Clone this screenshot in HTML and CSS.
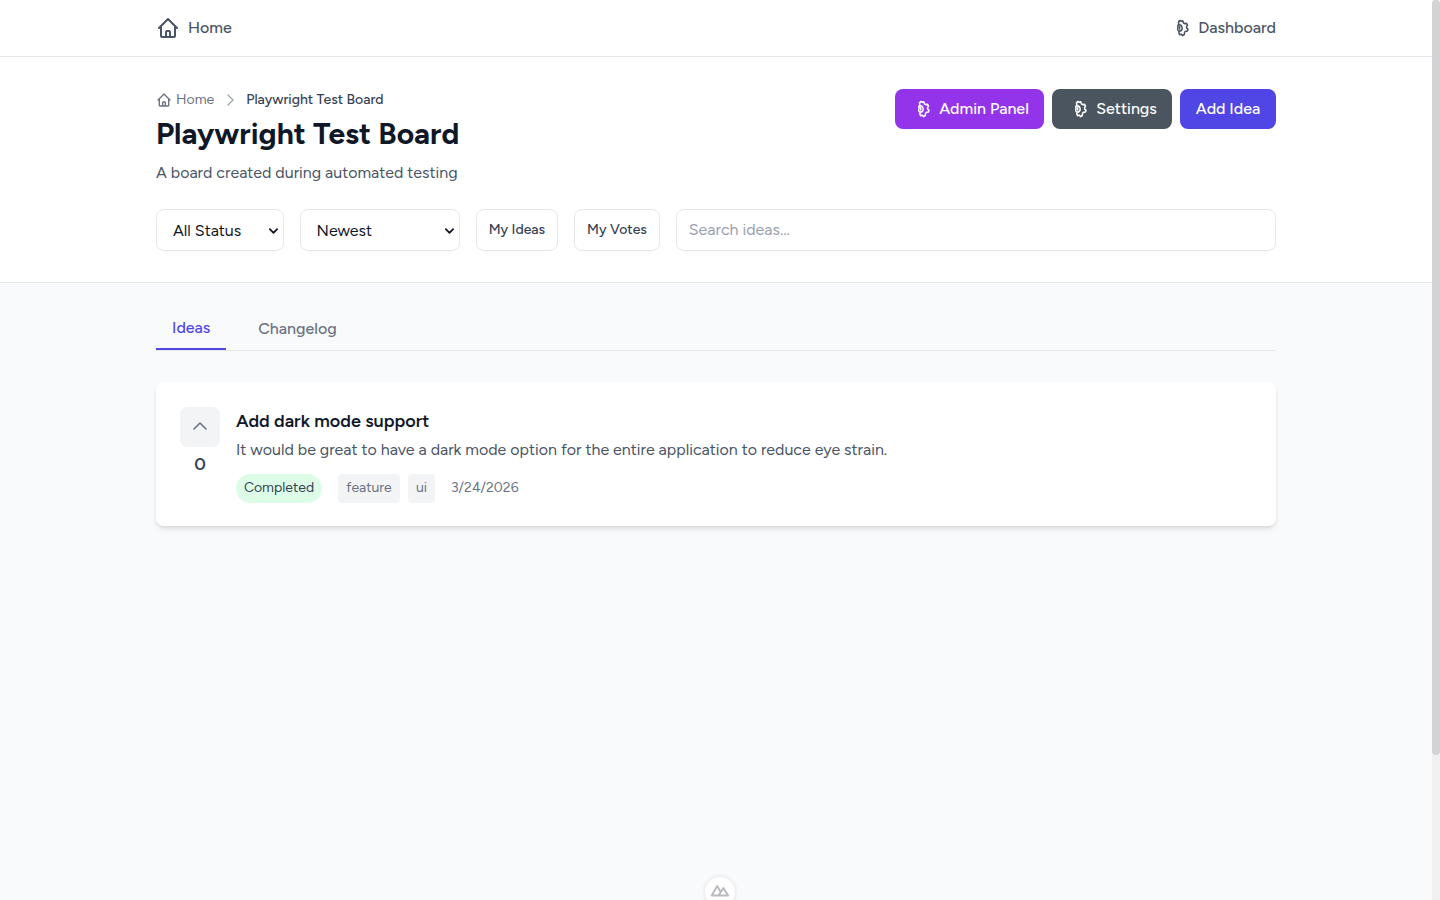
FILE: index.html
```
<!DOCTYPE html>
<html lang="en">
<head>
    <meta charset="UTF-8">
    <meta name="viewport" content="width=device-width, initial-scale=1.0">
    <title>Playwright Test Board</title>
    <link rel="stylesheet" href="styles.css">
</head>
<body>
    <svg class="sprite" aria-hidden="true">
        <symbol id="home" viewBox="0 0 24 24">
            <path d="M3 12l2-2m0 0l7-7 7 7M5 10v10a1 1 0 001 1h3m10-11l2 2m-2-2v10a1 1 0 01-1 1h-3m-6 0a1 1 0 001-1v-4a1 1 0 011-1h2a1 1 0 011 1v4a1 1 0 001 1m-6 0h6"/>
        </symbol>
        <symbol id="cog" viewBox="0 0 16 18">
            <path transform="translate(1.9 0) scale(.88 1)" d="M3.400 5.200L2.900 3 4.600 1.500l1.900.8 1.300-.5.8 2.100 1.300.700 2.100-.3 1.200 1.700-1.100 1.800.1 1.200 1.600 1.400-.8 1.600-2.200.3-1 1-.2 2.200-1.900 1.100-1.700-1.400-1.600.4-1.100-1.300.5-2.100M3.200 5.600C2 6.300 2 7.500 2.500 8.500c-.9 1.200-.5 2.900.8 3.500 2.200.5 3.800-.9 3.800-2.800S5.400 5.800 3.200 5.600zM4.300 7.800v2"/>
        </symbol>
    </svg>

    <nav class="navbar">
        <div class="container nav-row">
            <a class="nav-link" href="#"><svg class="icon-home"><use href="#home"/></svg><span>Home</span></a>
            <a class="nav-link" href="#"><svg class="icon-cog"><use href="#cog"/></svg><span>Dashboard</span></a>
        </div>
    </nav>

    <header class="board-header">
        <div class="container">
            <div class="header-top">
                <div>
                    <div class="breadcrumb">
                        <svg class="icon-small"><use href="#home"/></svg>
                        <a href="#">Home</a>
                        <svg class="chevron" viewBox="0 0 16 16"><path d="M6 3l5 5-5 5"/></svg>
                        <span class="current">Playwright Test Board</span>
                    </div>
                    <h1>Playwright Test Board</h1>
                    <p class="description">A board created during automated testing</p>
                </div>
                <div class="actions">
                    <button class="btn purple"><svg class="icon-cog"><use href="#cog"/></svg><span>Admin Panel</span></button>
                    <button class="btn gray"><svg class="icon-cog"><use href="#cog"/></svg><span>Settings</span></button>
                    <button class="btn indigo"><span>Add Idea</span></button>
                </div>
            </div>

            <div class="filters">
                <div class="field select status"><span>All Status</span><svg viewBox="0 0 10 6"><path d="M1 1l4 4 4-4"/></svg></div>
                <div class="field select sort"><span>Newest</span><svg viewBox="0 0 10 6"><path d="M1 1l4 4 4-4"/></svg></div>
                <button class="field toggle my-ideas">My Ideas</button>
                <button class="field toggle my-votes">My Votes</button>
                <input class="field search" type="text" placeholder="Search ideas...">
            </div>
        </div>
    </header>

    <main class="container">
        <div class="tabs">
            <a class="tab active" href="#">Ideas</a>
            <a class="tab" href="#">Changelog</a>
        </div>

        <article class="card">
            <div class="vote">
                <button class="vote-btn"><svg viewBox="0 0 20 20"><path d="M4 13l6-6 6 6"/></svg></button>
                <span class="count">0</span>
            </div>
            <div class="idea">
                <h3>Add dark mode support</h3>
                <p>It would be great to have a dark mode option for the entire application to reduce eye strain.</p>
                <div class="meta">
                    <span class="badge">Completed</span>
                    <span class="tag feature">feature</span>
                    <span class="tag ui">ui</span>
                    <span class="date">3/24/2026</span>
                </div>
            </div>
        </article>
    </main>

    <div class="devtools">
        <svg viewBox="0 0 20 13"><path d="M11.500 11.500H1.800L7.200 2l3.600 6.300M8.500 11.500L13.400 4l4.800 7.500H12"/></svg>
    </div>
    <div class="scrollbar"><div class="thumb"></div></div>
</body>
</html>
```

FILE: styles.css
```
* {
    box-sizing: border-box;
}
body {
    margin: 0;
    padding-right: 8px;
    height: 900px;
    overflow: hidden;
    background: #f9fafb;
    color: #101828;
    font-family: Figtree, Inter, "Liberation Sans", sans-serif;
    font-size: 16px;
    line-height: 24px;
}
h1, h3, p {
    margin: 0;
}
a {
    color: inherit;
    text-decoration: none;
}
button, input {
    font-family: inherit;
}
svg {
    flex: none;
    fill: none;
    stroke: currentColor;
    stroke-width: 2;
    stroke-linecap: round;
    stroke-linejoin: round;
}
.sprite {
    display: none;
}
.container {
    width: 1120px;
    margin: 0 auto;
}

.navbar {
    height: 57px;
    background: #fff;
    border-bottom: 1px solid #e5e7eb;
}
.nav-row {
    display: flex;
    justify-content: space-between;
    align-items: center;
    height: 56px;
}
.nav-link {
    display: flex;
    align-items: center;
    gap: 8px;
    color: #4a5565;
    font-weight: 500;
}
.icon-home {
    width: 24px;
    height: 24px;
}
.icon-cog {
    width: 16px;
    height: 18px;
    stroke-width: 1.7;
}

.board-header {
    height: 226px;
    padding-top: 32px;
    background: #fff;
    border-bottom: 1px solid #e5e7eb;
}
.header-top {
    display: flex;
    justify-content: space-between;
    align-items: flex-start;
    height: 120px;
}
.breadcrumb {
    display: flex;
    align-items: center;
    height: 21px;
    color: #6a7282;
    font-size: 14px;
}
.icon-small {
    width: 16px;
    height: 16px;
    margin-right: 4px;
}
.chevron {
    width: 16px;
    height: 16px;
    margin: 0 8px;
    color: #99a1af;
    stroke-width: 1.2;
}
.current {
    color: #364153;
    font-weight: 500;
}
h1 {
    margin-top: 6px;
    font-size: 30px;
    line-height: 36px;
    font-weight: 700;
}
.description {
    margin-top: 9px;
    color: #4a5565;
}
.actions {
    display: flex;
    gap: 8px;
}
.btn {
    display: flex;
    align-items: center;
    justify-content: center;
    height: 40px;
    padding: 0 0 2px;
    border: 0;
    border-radius: 8px;
    color: #fff;
    font-size: 16px;
    font-weight: 500;
}
.btn svg {
    margin: 2px 8px 0 0;
}
.purple {
    width: 149px;
    padding-left: 5px;
    background: #9333ea;
}
.gray {
    width: 120px;
    padding-left: 5px;
    background: #4a5560;
}
.indigo {
    width: 96px;
    background: #4f46e5;
}

.filters {
    display: flex;
    gap: 16px;
}
.field {
    height: 42px;
    border: 1px solid #e5e7eb;
    border-radius: 8px;
    background: #fff;
}
.select {
    display: flex;
    align-items: center;
    justify-content: space-between;
    padding: 1px 5px 0 16px;
}
.select svg {
    width: 9px;
    height: 6px;
}
.status {
    width: 127.6px;
}
.sort {
    width: 160px;
}
.toggle {
    padding: 0 0 2px;
    color: #364153;
    font-size: 14px;
    font-weight: 500;
}
.my-ideas {
    width: 82.6px;
}
.my-votes {
    width: 85.6px;
}
.search {
    flex: 1;
    min-width: 0;
    padding: 0 12px 1px;
    font-size: 16px;
}
.search::placeholder {
    color: #99a1af;
}

.tabs {
    display: flex;
    gap: 16px;
    height: 44px;
    margin-top: 24px;
    border-bottom: 1px solid #e5e7eb;
}
.tab {
    height: 43px;
    padding: 10px 16px 0;
    color: #6a7282;
    font-weight: 500;
}
.tab.active {
    padding-top: 9px;
    border-bottom: 2px solid #4f46e5;
    color: #4f46e5;
}

.card {
    display: flex;
    gap: 16px;
    height: 144px;
    margin-top: 31px;
    padding: 25px 24px 23px;
    background: #fff;
    border-radius: 8px;
    box-shadow: 0 4px 6px -1px rgba(0, 0, 0, 0.1), 0 2px 4px -2px rgba(0, 0, 0, 0.1);
}
.vote {
    display: flex;
    flex-direction: column;
    align-items: center;
    width: 40px;
}
.vote-btn {
    display: flex;
    align-items: center;
    justify-content: center;
    width: 40px;
    height: 40px;
    padding: 0 0 2px;
    border: 0;
    border-radius: 8px;
    background: #f3f4f6;
    color: #6a7282;
}
.vote-btn svg {
    width: 20px;
    height: 20px;
    stroke-width: 1.6;
}
.count {
    margin-top: 3px;
    color: #364153;
    font-size: 18px;
    line-height: 28px;
    font-weight: 600;
}
h3 {
    font-size: 18px;
    line-height: 28px;
    font-weight: 600;
}
.idea p {
    margin-top: 3px;
    color: #4a5565;
}
.meta {
    display: flex;
    height: 29px;
    margin-top: 12px;
    font-size: 14px;
    line-height: 27px;
    color: #6a7282;
}
.badge {
    width: 86px;
    margin-right: 16px;
    border-radius: 15px;
    background: #dcfce7;
    color: #364153;
    text-align: center;
}
.tag {
    margin-right: 8px;
    border-radius: 4px;
    background: #f3f4f6;
    text-align: center;
}
.feature {
    width: 62px;
}
.ui {
    width: 27px;
    margin-right: 16px;
}

.devtools {
    position: fixed;
    left: 705px;
    top: 877px;
    width: 30px;
    height: 30px;
    padding: 7px 5px;
    border-radius: 50%;
    background: #fff;
    box-shadow: 0 0 5px rgba(0, 0, 0, 0.12);
    color: #b8babd;
}
.devtools svg {
    display: block;
    width: 20px;
    height: 13px;
    stroke-width: 1.9;
}
.scrollbar {
    position: fixed;
    top: 0;
    right: 0;
    width: 8px;
    height: 900px;
    background: #f1f1f2;
}
.thumb {
    height: 755px;
    border-radius: 4px;
    background: #d3d3d5;
}
```
